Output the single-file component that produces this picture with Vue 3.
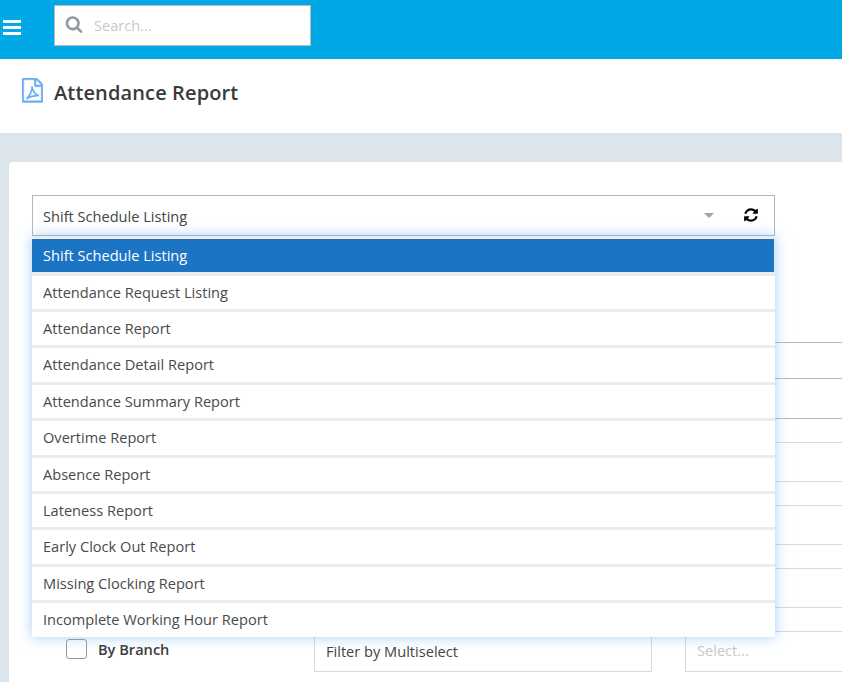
<script setup>
const options = [
  'Shift Schedule Listing',
  'Attendance Request Listing',
  'Attendance Report',
  'Attendance Detail Report',
  'Attendance Summary Report',
  'Overtime Report',
  'Absence Report',
  'Lateness Report',
  'Early Clock Out Report',
  'Missing Clocking Report',
  'Incomplete Working Hour Report'
]
</script>

<template>
  <div class="page">
    <header class="topbar">
      <button class="burger" aria-label="Menu"><span></span><span></span><span></span></button>
      <div class="search">
        <svg class="search-icon" viewBox="0 0 1792 1792"><path d="M1216 832q0-185-131.5-316.5t-316.5-131.5-316.5 131.5-131.5 316.5 131.5 316.5 316.5 131.5 316.5-131.5 131.5-316.5zm512 832q0 52-38 90t-90 38q-54 0-90-38l-343-342q-179 124-399 124-143 0-273.5-55.5t-225-150-150-225-55.5-273.5 55.5-273.5 150-225 225-150 273.5-55.5 273.5 55.5 225 150 150 225 55.5 273.5q0 220-124 399l343 343q37 37 37 90z"/></svg>
        <span class="search-text">Search...</span>
      </div>
    </header>

    <section class="titlebar">
      <svg class="pdf-icon" viewBox="128 0 1536 1792">
        <path fill="#6cb0f2" stroke="#6cb0f2" stroke-width="40" d="M1596 380q28 28 48 76t20 88v1152q0 40-28 68t-68 28h-1344q-40 0-68-28t-28-68v-1600q0-40 28-68t68-28h896q40 0 88 20t76 48zm-444-244v376h376q-10-29-22-41l-313-313q-12-12-41-22zm384 1528v-1024h-416q-40 0-68-28t-28-68v-416h-768v1536h1280z"/>
        <path fill="none" stroke="#6cb0f2" stroke-width="120" stroke-linejoin="round" d="M860 640C880 900 760 1200 480 1500C750 1330 1000 1270 1320 1290C1080 1200 920 950 860 640z"/>
      </svg>
      <h1>Attendance Report</h1>
    </section>

    <main class="main">
      <div class="card">
        <div class="picker">
          <div class="trigger">
            <span class="trigger-text">Shift Schedule Listing</span>
            <span class="caret"></span>
            <svg class="refresh" viewBox="0 0 1792 1792"><path d="M1639 1056q0 5-1 7-64 268-268 434.500t-478 166.500q-146 0-282.500-55t-243.500-157l-129 129q-19 19-45 19t-45-19-19-45v-448q0-26 19-45t45-19h448q26 0 45 19t19 45-19 45l-137 137q71 66 161 102t187 36q134 0 250-65t186-179q11-17 53-117 8-23 30-23h192q13 0 22.500 9.500t9.500 22.500zm25-800v448q0 26-19 45t-45 19h-448q-26 0-45-19t-19-45 19-45l138-138q-148-137-349-137-134 0-250 65t-186 179q-11 17-53 117-8 23-30 23h-199q-13 0-22.500-9.500t-9.500-22.500v-7q65-268 270-434.500t480-166.500q146 0 284 55.500t245 156.500l130-129q19-19 45-19t45 19 19 45z"/></svg>
          </div>
          <ul class="menu">
            <li v-for="(o, i) in options" :key="o" class="item" :class="{ active: i === 0 }">{{ o }}</li>
          </ul>
        </div>

        <div class="form">
          <div class="row row-gray first"><div class="cell"></div></div>
          <div class="row row-gray second"><div class="cell"></div></div>
          <div class="row spaced"><div class="cell"></div></div>
          <div class="row spaced"><div class="cell"></div></div>
          <div class="row spaced"><div class="cell"></div></div>
          <div class="row spaced last">
            <label class="check"><span class="box"></span><span class="check-label">By Branch</span></label>
            <div class="mid">Filter by Multiselect</div>
            <div class="cell placeholder">Select...</div>
          </div>
        </div>
      </div>
    </main>
  </div>
</template>

<style>
html, body { margin: 0; overflow: hidden; }
</style>

<style scoped>
.page {
  width: 842px;
  height: 682px;
  overflow: hidden;
  background: #dde5ec;
  font-family: "Open Sans", "Noto Sans", sans-serif;
  font-size: 14.6px;
  color: #444;
}
.topbar {
  height: 59px;
  background: #00a8e6;
  display: flex;
  align-items: flex-start;
  box-sizing: border-box;
  padding: 5px 0 0 3px;
}
.burger {
  width: 18px;
  margin: 15px 33px 0 0;
  padding: 0;
  border: 0;
  background: none;
  display: flex;
  flex-direction: column;
  gap: 2.6px;
}
.burger span { display: block; height: 3.2px; background: #fff; }
.search {
  width: 257px;
  height: 41px;
  box-sizing: border-box;
  background: #fff;
  border: 1px solid #b9b9b9;
  display: flex;
  align-items: center;
  padding-left: 10px;
}
.search-icon { width: 18px; height: 18px; fill: #909aa3; margin: -4px 11px 0 0; }
.search-text { color: #c9c9c9; margin-top: -2px; }
.titlebar {
  height: 74px;
  background: #fff;
  display: flex;
  align-items: flex-start;
  box-sizing: border-box;
  padding: 19px 0 0 22px;
}
.pdf-icon { width: 21px; height: 24.5px; margin-right: 11px; }
h1 {
  margin: 1px 0 0;
  font-size: 20px;
  line-height: 28px;
  font-weight: 600;
  letter-spacing: 0.13px;
  color: #3a3a3a;
}
.main { padding: 29px 0 0 9px; }
.card {
  width: 1000px;
  height: 560px;
  box-sizing: border-box;
  background: #fff;
  border-radius: 4px 0 0 0;
  padding: 33px 0 0 23px;
}
.picker { position: relative; width: 743px; }
.trigger {
  height: 41px;
  box-sizing: border-box;
  border: 1px solid #b6b6b6;
  display: flex;
  align-items: center;
  padding-left: 10px;
}
.trigger-text { flex: 1; }
.caret {
  width: 0;
  height: 0;
  border-left: 5px solid transparent;
  border-right: 5px solid transparent;
  border-top: 5px solid #a0a4a8;
  margin: 0 29.5px 0 0;
}
.refresh { width: 16px; height: 16px; margin-right: 15px; margin-top: -2px; }
.menu {
  position: absolute;
  top: 41px;
  left: 0;
  width: 743px;
  z-index: 5;
  margin: 0;
  padding: 3.3px 0 0;
  list-style: none;
  background: #ececec;
  box-shadow: 0 0 12px rgba(90, 165, 245, 0.55);
  display: flex;
  flex-direction: column;
  gap: 3px;
}
.item {
  height: 33.4px;
  line-height: 33.4px;
  padding-left: 11px;
  background: #fff;
  color: #4a4a4a;
}
.item.active {
  height: 33px;
  margin-bottom: 0.4px;
  background: #1c75c4;
  color: #fff;
  margin-right: 1px;
}
.form { margin-top: 106px; display: flex; flex-direction: column; }
.row {
  display: grid;
  grid-template-columns: 282px 338px 33px 300px;
}
.row .cell { grid-column: 4; box-sizing: border-box; border: 1px solid #d9d6e8; height: 40px; }
.row-gray .cell { border-color: #b9b9b9; }
.first .cell { height: 36px; border-bottom: 0; }
.second .cell { height: 41px; }
.spaced { margin-top: 23px; }
.last .cell { height: 41px; padding: 8px 11px; }
.placeholder { color: #c9c9c9; line-height: 20px; }
.check { display: flex; align-items: center; padding-left: 34px; height: 36px; }
.box {
  width: 21px;
  height: 20px;
  box-sizing: border-box;
  border: 1px solid #999;
  border-radius: 3px;
  margin-right: 11px;
}
.check-label { font-weight: 600; color: #3d3d3d; margin-top: -1px; }
.mid {
  box-sizing: border-box;
  height: 41px;
  border: 1px solid #d9d6e8;
  padding: 9px 11px;
  line-height: 20px;
  color: #444;
}
</style>
